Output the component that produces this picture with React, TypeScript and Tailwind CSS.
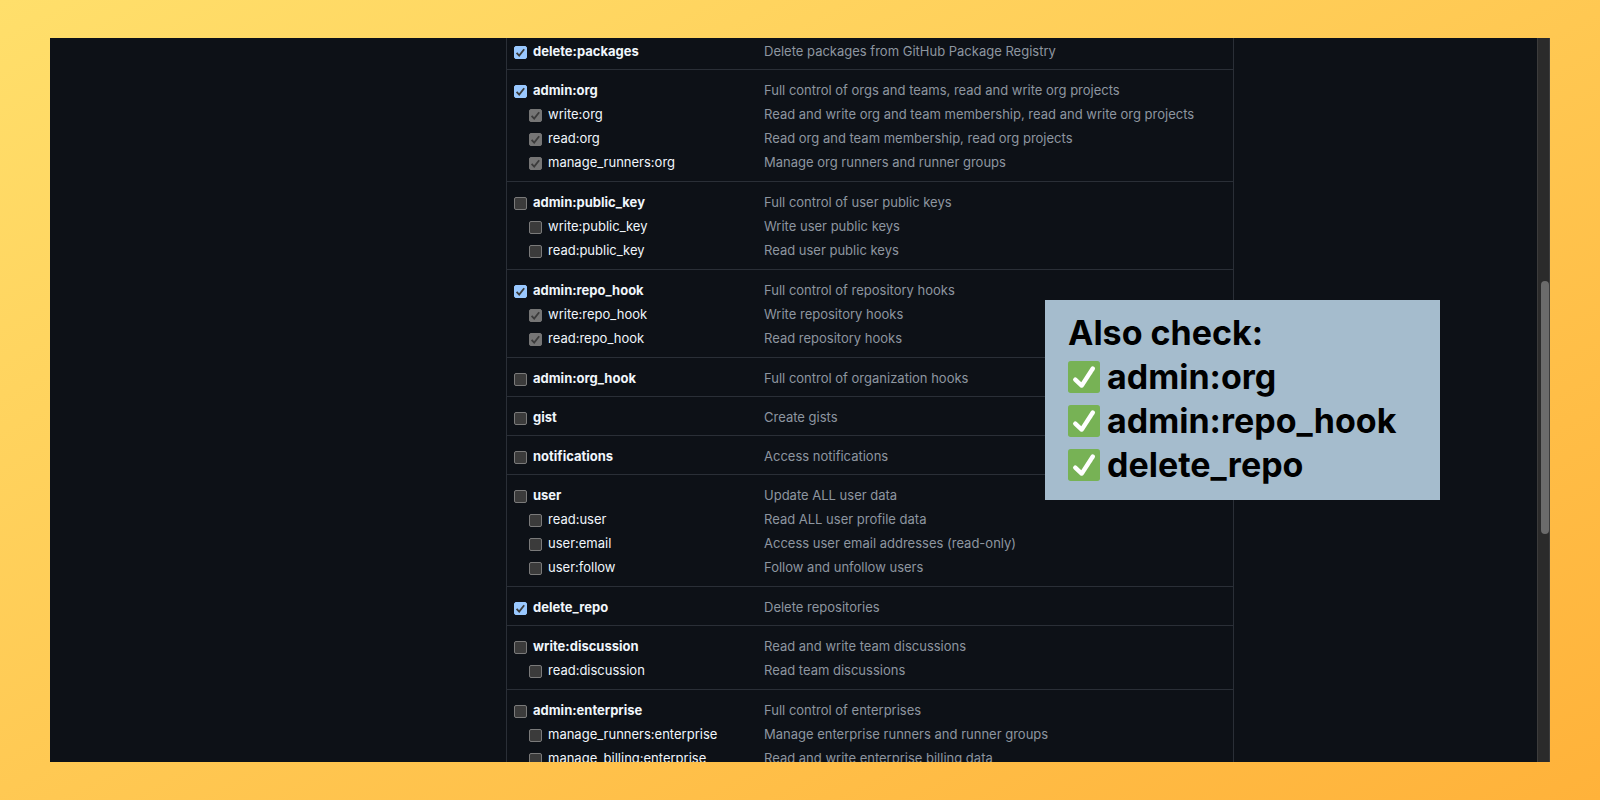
import { useState } from "react";

type Scope = { name: string; description: string };
type ScopeGroup = Scope & { checked?: boolean; children?: Scope[] };

const groups: ScopeGroup[] = [
  { name: "delete:packages", description: "Delete packages from GitHub Package Registry", checked: true },
  {
    name: "admin:org",
    description: "Full control of orgs and teams, read and write org projects",
    checked: true,
    children: [
      { name: "write:org", description: "Read and write org and team membership, read and write org projects" },
      { name: "read:org", description: "Read org and team membership, read org projects" },
      { name: "manage_runners:org", description: "Manage org runners and runner groups" },
    ],
  },
  {
    name: "admin:public_key",
    description: "Full control of user public keys",
    children: [
      { name: "write:public_key", description: "Write user public keys" },
      { name: "read:public_key", description: "Read user public keys" },
    ],
  },
  {
    name: "admin:repo_hook",
    description: "Full control of repository hooks",
    checked: true,
    children: [
      { name: "write:repo_hook", description: "Write repository hooks" },
      { name: "read:repo_hook", description: "Read repository hooks" },
    ],
  },
  { name: "admin:org_hook", description: "Full control of organization hooks" },
  { name: "gist", description: "Create gists" },
  { name: "notifications", description: "Access notifications" },
  {
    name: "user",
    description: "Update ALL user data",
    children: [
      { name: "read:user", description: "Read ALL user profile data" },
      { name: "user:email", description: "Access user email addresses (read-only)" },
      { name: "user:follow", description: "Follow and unfollow users" },
    ],
  },
  { name: "delete_repo", description: "Delete repositories", checked: true },
  {
    name: "write:discussion",
    description: "Read and write team discussions",
    children: [{ name: "read:discussion", description: "Read team discussions" }],
  },
  {
    name: "admin:enterprise",
    description: "Full control of enterprises",
    children: [
      { name: "manage_runners:enterprise", description: "Manage enterprise runners and runner groups" },
      { name: "manage_billing:enterprise", description: "Read and write enterprise billing data" },
    ],
  },
];

type RowProps = Scope & {
  checked: boolean;
  disabled?: boolean;
  nested?: boolean;
  onToggle: () => void;
};

function ScopeRow({ name, description, checked, disabled, nested, onToggle }: RowProps) {
  return (
    <div className="flex h-6 items-center">
      <label
        className={`flex w-[250px] shrink-0 items-center gap-1.5 text-[#f0f6fc] ${nested ? "pl-[15px] font-normal" : "font-bold"}`}
      >
        <span className="mt-0.5 grid size-[13px] shrink-0">
          <input
            type="checkbox"
            checked={checked}
            disabled={disabled}
            onChange={onToggle}
            className="col-start-1 row-start-1 size-[13px] appearance-none rounded-[2px] border border-[#7a7a7a] bg-[#3b3b3b] checked:border-[#99c8ff] checked:bg-[#99c8ff] disabled:border-[#757575] disabled:bg-[#757575]"
          />
          {checked && (
            <svg
              viewBox="0 0 13 13"
              className="pointer-events-none col-start-1 row-start-1 size-[13px]"
              fill="none"
              stroke="#3b3b3b"
              strokeWidth="1.8"
              aria-hidden="true"
            >
              <path d="M2.6 6.8 5.2 9.6 10.2 3.2" />
            </svg>
          )}
        </span>
        {name}
      </label>
      <span className="text-[#8d96a0]">{description}</span>
    </div>
  );
}

function ScopeSection({ group }: { group: ScopeGroup }) {
  const [checked, setChecked] = useState(Boolean(group.checked));
  const [selected, setSelected] = useState<string[]>([]);
  const toggleChild = (name: string) =>
    setSelected((list) => (list.includes(name) ? list.filter((n) => n !== name) : [...list, name]));

  return (
    <li className="border-b border-[#2a2f37] pt-2 pb-1.5 pl-[7px]">
      <ScopeRow
        name={group.name}
        description={group.description}
        checked={checked}
        onToggle={() => setChecked(!checked)}
      />
      {group.children && (
        <div className="pb-px">
          {group.children.map((child) => (
            <ScopeRow
              key={child.name}
              {...child}
              nested
              checked={checked || selected.includes(child.name)}
              disabled={checked}
              onToggle={() => toggleChild(child.name)}
            />
          ))}
        </div>
      )}
    </li>
  );
}

function CheckMark() {
  return (
    <svg viewBox="0 0 36 36" className="size-8 shrink-0" aria-hidden="true">
      <rect width="36" height="36" rx="3" fill="#77b255" />
      <path
        fill="#fff"
        d="M29.28 6.362a2.502 2.502 0 0 0-3.458.736L14.936 23.877l-5.029-4.65a2.5 2.5 0 1 0-3.394 3.671l7.209 6.666c.48.445 1.09.665 1.696.665.673 0 1.534-.282 2.099-1.139.332-.506 12.5-19.27 12.5-19.27a2.5 2.5 0 0 0-.737-3.458z"
      />
    </svg>
  );
}

export default function App() {
  return (
    <div className="flex h-screen flex-col bg-[linear-gradient(153deg,#ffdf6b_0%,#ffb23a_100%)] px-[50px] py-[38px]">
      <div className="relative flex min-h-0 flex-1 overflow-hidden bg-[#0d1117]">
        <main className="min-w-0 flex-1 pl-[456px]">
          <ul className="-mt-[7px] w-full max-w-[728px] border-x border-[#2a2f37] font-['Inter',sans-serif] text-[13px] leading-5 whitespace-nowrap">
            {groups.map((group) => (
              <ScopeSection key={group.name} group={group} />
            ))}
          </ul>
        </main>
        <div className="flex w-[13px] shrink-0 flex-col items-end border-x border-[#3c3c3c] bg-[#2b2b2b]">
          <div className="h-[243px] shrink-0" />
          <div className="h-[253px] w-2 shrink-0 rounded-full bg-[#6b6b6b]" />
        </div>
        <aside className="absolute top-[262px] right-[110px] w-[395px] bg-[#a5bccd] px-[23px] pt-[11px] pb-[13px] font-['Inter',sans-serif] text-[34px] leading-[44px] font-bold whitespace-nowrap text-black">
          <p>Also check:</p>
          <ul>
            {["admin:org", "admin:repo_hook", "delete_repo"].map((name) => (
              <li key={name} className="flex items-center gap-[7px]">
                <CheckMark />
                {name}
              </li>
            ))}
          </ul>
        </aside>
      </div>
    </div>
  );
}
